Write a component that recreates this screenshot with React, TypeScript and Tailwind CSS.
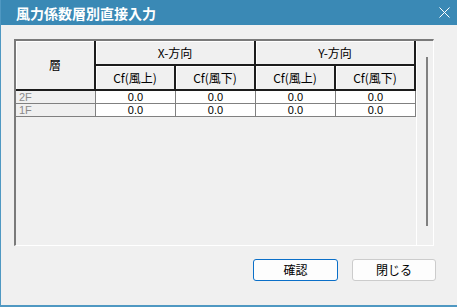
import React from 'react';

const font = { fontFamily: '"Noto Sans CJK JP", "Liberation Sans", sans-serif' };
const numFont = { fontFamily: '"Liberation Sans Narrow", "Liberation Sans", sans-serif' };

const rows = [
  { name: '2F', values: ['0.0', '0.0', '0.0', '0.0'] },
  { name: '1F', values: ['0.0', '0.0', '0.0', '0.0'] },
];

const headCell =
  'flex items-center justify-center bg-[#f0f0f0] border-r-2 border-b-2 border-[#1c1c1c] shadow-[inset_1px_1px_0_#ffffff] text-[12px] text-black';

const App = () => {
  return (
    <div
      className="w-[457px] h-[307px] bg-[#f0f0f0] border-l border-b-2 border-[#4f98c2] flex flex-col overflow-hidden"
      style={font}
    >
      {/* title bar */}
      <div className="h-[25px] bg-[#3a89b5] flex items-center justify-between pl-[15px] pr-[7px] shrink-0">
        <span className="text-white text-[14px] font-bold leading-none">風力係数層別直接入力</span>
        <svg width="11" height="11" viewBox="0 0 11 11">
          <path d="M0.5 0.5 L10.5 10.5 M10.5 0.5 L0.5 10.5" stroke="#ffffff" strokeWidth="1" fill="none" />
        </svg>
      </div>

      {/* grid */}
      <div className="pt-[14px] pl-[13px]">
        <div className="w-[420px] h-[207px] border-t-2 border-l-2 border-[#7a7a7a] border-b border-b-white border-r border-r-white flex">
          <div className="w-[400px] flex flex-col">
            <div className="grid grid-cols-[80px_80px_80px_80px_80px] grid-rows-[25px_25px]">
              <div className={`${headCell} row-span-2`}>層</div>
              <div className={`${headCell} col-span-2`}>X-方向</div>
              <div className={`${headCell} col-span-2`}>Y-方向</div>
              <div className={headCell}>Cf(風上)</div>
              <div className={headCell}>Cf(風下)</div>
              <div className={headCell}>Cf(風上)</div>
              <div className={headCell}>Cf(風下)</div>
            </div>
            {rows.map((r) => (
              <div key={r.name} className="flex h-[13px] text-[11px] leading-[12px]" style={numFont}>
                <div className="w-[80px] h-[13px] bg-[#f0f0f0] border-r border-b border-[#808080] text-[#8a8a8a] pl-[3px]">
                  {r.name}
                </div>
                {r.values.map((v, i) => (
                  <div
                    key={i}
                    className="w-[80px] h-[13px] bg-white border-r border-b border-[#808080] text-black text-center"
                  >
                    {v}
                  </div>
                ))}
              </div>
            ))}
          </div>
          <div className="flex-1 border-l border-white flex justify-end pr-[5px] pt-[16px] pb-[19px]">
            <div className="w-[2px] bg-[#808080]" />
          </div>
        </div>
      </div>

      {/* buttons */}
      <div className="flex justify-end gap-[14px] pr-[21px] pt-[13px]">
        <button className="w-[85px] h-[22px] rounded-[3px] border border-[#0a6fc8] bg-[#fdfdfd] text-[12px] text-black">
          確認
        </button>
        <button className="w-[84px] h-[22px] rounded-[3px] border border-[#cccccc] bg-[#fdfdfd] text-[12px] text-black">
          閉じる
        </button>
      </div>
    </div>
  );
};

export default App;
